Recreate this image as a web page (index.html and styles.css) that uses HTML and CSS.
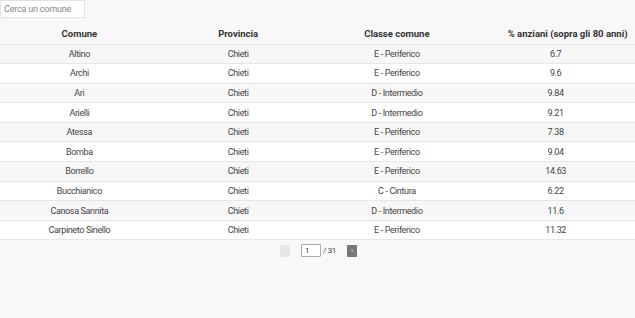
FILE: index.html
```html
<!DOCTYPE html>
<html lang="it">
<head>
    <meta charset="UTF-8">
    <meta name="viewport" content="width=device-width, initial-scale=1.0">
    <title>Comuni - anziani</title>
    <link rel="stylesheet" href="styles.css">
</head>
<body>
    <div class="search-bar">
        <input type="text" class="search-input" placeholder="Cerca un comune">
    </div>

    <table class="data-table">
        <thead>
            <tr>
                <th>Comune</th>
                <th>Provincia</th>
                <th>Classe comune</th>
                <th class="col-pct">% anziani (sopra gli 80 anni)</th>
            </tr>
        </thead>
        <tbody>
            <tr><td>Altino</td><td>Chieti</td><td>E - Periferico</td><td>6.7</td></tr>
            <tr><td>Archi</td><td>Chieti</td><td>E - Periferico</td><td>9.6</td></tr>
            <tr><td>Ari</td><td>Chieti</td><td>D - Intermedio</td><td>9.84</td></tr>
            <tr><td>Arielli</td><td>Chieti</td><td>D - Intermedio</td><td>9.21</td></tr>
            <tr><td>Atessa</td><td>Chieti</td><td>E - Periferico</td><td>7.38</td></tr>
            <tr><td>Bomba</td><td>Chieti</td><td>E - Periferico</td><td>9.04</td></tr>
            <tr><td>Borrello</td><td>Chieti</td><td>E - Periferico</td><td>14.63</td></tr>
            <tr><td>Bucchianico</td><td>Chieti</td><td>C - Cintura</td><td>6.22</td></tr>
            <tr><td>Canosa Sannita</td><td>Chieti</td><td>D - Intermedio</td><td>11.6</td></tr>
            <tr><td>Carpineto Sinello</td><td>Chieti</td><td>E - Periferico</td><td>11.32</td></tr>
        </tbody>
    </table>

    <div class="pager">
        <button class="pager-btn prev" disabled>&lsaquo;</button>
        <input type="text" class="pager-input" value="1">
        <span class="pager-total">/ 31</span>
        <button class="pager-btn next">&rsaquo;</button>
    </div>
</body>
</html>
```

FILE: styles.css
```css
/* Reset and base styles */
* {
    box-sizing: border-box;
    margin: 0;
    padding: 0;
}

body {
    font-family: Roboto, 'Liberation Sans', sans-serif;
    font-size: 9px;
    color: #333;
    background-color: #f8f8f8;
}

/* Search */
.search-bar {
    height: 23px;
}

.search-input {
    width: 85px;
    height: 18px;
    padding: 0 3px;
    border: 1px solid #e2e2e2;
    background-color: #fff;
    font-family: inherit;
    font-size: 9px;
    letter-spacing: -0.2px;
    color: #333;
    outline: none;
}

.search-input::placeholder {
    color: #888;
}

/* Table */
.data-table {
    width: 100%;
    border-collapse: collapse;
    table-layout: fixed;
}

.data-table th,
.data-table td {
    text-align: center;
    letter-spacing: -0.35px;
}

.data-table th {
    height: 21px;
    font-size: 9.5px;
    font-weight: bold;
    letter-spacing: 0;
    color: #333;
    border-bottom: 1px solid #e3e3e3;
}

.data-table th.col-pct {
    padding-left: 24px;
}

.data-table td {
    height: 19.6px;
    color: #444;
    border-bottom: 1px solid #e6e6e6;
}

.data-table tbody tr:nth-child(odd) {
    background-color: #f7f7f7;
}

.data-table tbody tr:nth-child(even) {
    background-color: #fff;
}

/* Pagination */
.pager {
    display: flex;
    justify-content: center;
    align-items: center;
    padding-top: 4px;
    padding-left: 2px;
}

.pager-btn {
    width: 10px;
    height: 12px;
    border: none;
    border-radius: 1px;
    font-size: 7px;
    line-height: 12px;
    color: #fff;
    font-family: inherit;
}

.pager-btn.prev {
    background-color: #e6e6e6;
    color: #f4f4f4;
    margin-right: 11px;
}

.pager-btn.next {
    background-color: #777;
    margin-left: 11px;
}

.pager-input {
    width: 20px;
    height: 13px;
    border: 1px solid #aaa;
    border-radius: 1px;
    padding: 0 3px;
    font-family: inherit;
    font-size: 8px;
    color: #333;
    background-color: #fff;
}

.pager-total {
    margin-left: 2px;
    font-size: 8px;
    letter-spacing: -0.3px;
    color: #444;
}
```
